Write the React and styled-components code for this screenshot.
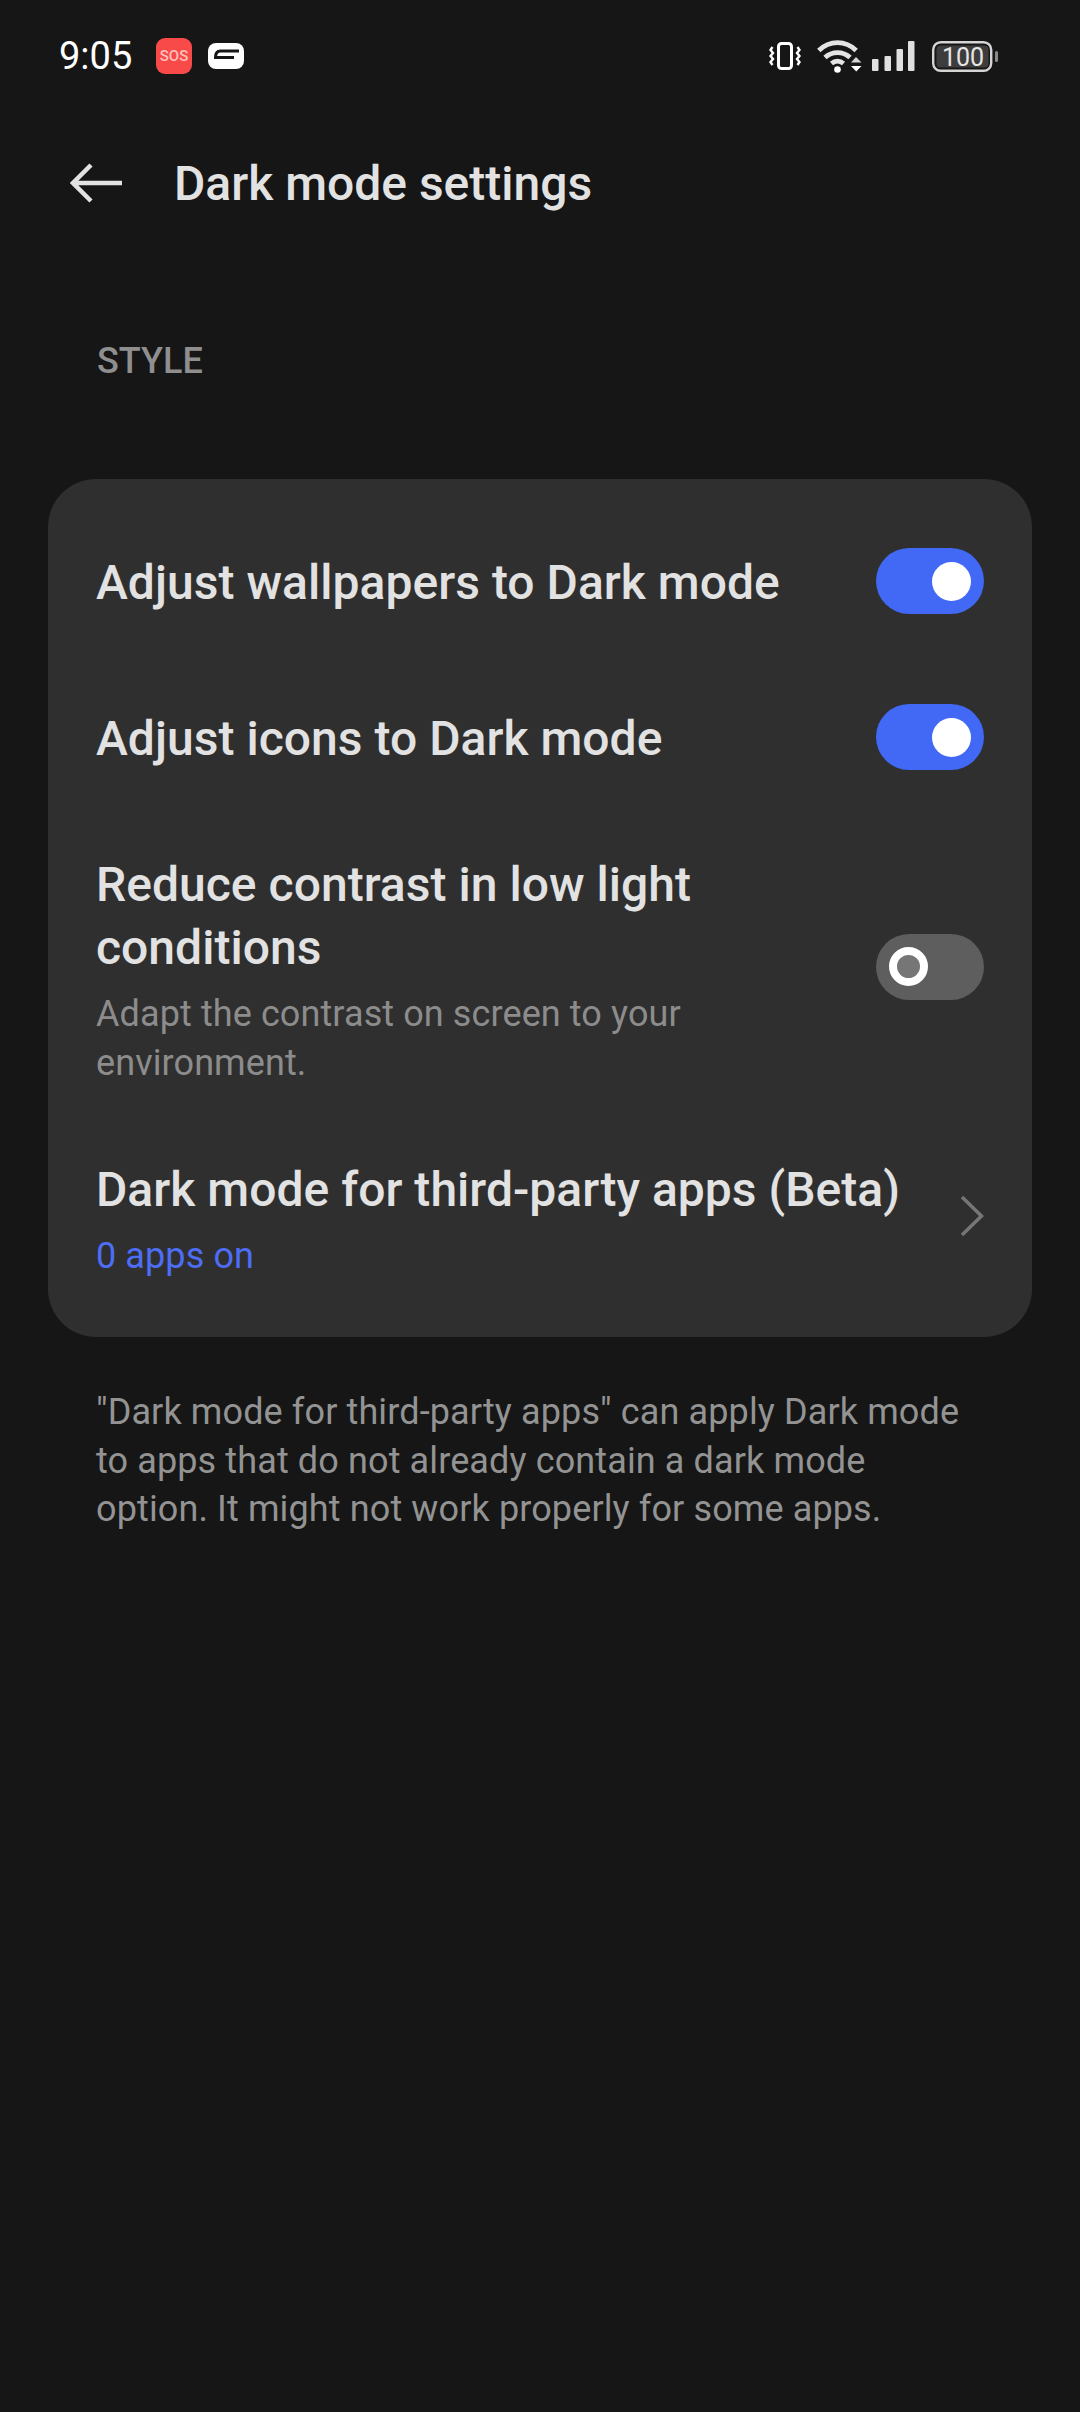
import React from "react";
import styled, { createGlobalStyle } from "styled-components";

const GlobalStyle = createGlobalStyle`
  html, body {
    margin: 0;
    padding: 0;
    background: #161616;
  }
  * {
    box-sizing: border-box;
  }
`;

const Screen = styled.div`
  width: 1080px;
  height: 2412px;
  background: #161616;
  font-family: Roboto, "Noto Sans", sans-serif;
  overflow: hidden;
`;

const StatusBar = styled.div`
  height: 112px;
  padding: 0 82px 0 59px;
  display: flex;
  align-items: center;
  justify-content: space-between;
`;

const StatusGroup = styled.div`
  display: flex;
  align-items: center;
`;

const Clock = styled.span`
  font-size: 38px;
  font-weight: 400;
  color: #fff;
  width: 97px;
`;

const SosBadge = styled.span`
  width: 36px;
  height: 36px;
  border-radius: 9px;
  background: #f84a48;
  color: #ffc0bd;
  font-size: 15px;
  font-weight: 500;
  display: flex;
  align-items: center;
  justify-content: center;
  margin-right: 16px;
`;

const Header = styled.div`
  height: 142px;
  padding-left: 70px;
  display: flex;
  align-items: center;
`;

const BackIcon = styled.svg`
  width: 52px;
  height: 40px;
  margin-right: 52px;
`;

const Title = styled.h1`
  margin: 0;
  font-size: 48px;
  font-weight: 500;
  color: #e2e2e2;
`;

const SectionLabel = styled.div`
  padding: 86px 0 0 97px;
  height: 225px;
  font-size: 36px;
  line-height: 42px;
  font-weight: 500;
  color: #8f8f8f;
`;

const Card = styled.div`
  margin: 0 48px;
  height: 858px;
  border-radius: 48px;
  background: #2f2f2f;
  padding-top: 22px;
`;

const Row = styled.div`
  display: flex;
  align-items: center;
  justify-content: space-between;
  padding: ${(p) => p.$top}px 48px ${(p) => p.$bottom}px;
`;

const RowText = styled.div`
  width: 700px;
`;

const RowTitle = styled.div`
  padding-top: ${(p) => p.$nudge || 0}px;
  font-size: 48px;
  letter-spacing: 0.03px;
  line-height: 63px;
  font-weight: 500;
  color: #e2e2e2;
`;

const RowSub = styled.div`
  margin-top: ${(p) => p.$gap}px;
  font-size: 36px;
  letter-spacing: 0.1px;
  line-height: 49px;
  color: ${(p) => (p.$accent ? "#4d6df5" : "#8c8c8c")};
`;

const Track = styled.div`
  width: 108px;
  height: 66px;
  border-radius: 33px;
  flex: none;
  display: flex;
  align-items: center;
  justify-content: ${(p) => (p.$on ? "flex-end" : "flex-start")};
  padding: 0 13px;
  margin-bottom: ${(p) => p.$lift || 0}px;
  background: ${(p) => (p.$on ? "#4268f6" : "#5e5e5e")};
`;

const Knob = styled.div`
  width: 39px;
  height: 39px;
  border-radius: 50%;
  background: ${(p) => (p.$on ? "#fff" : "#767676")};
  border: ${(p) => (p.$on ? "none" : "8px solid #fff")};
`;

const ChevronIcon = styled.svg`
  width: 24px;
  height: 42px;
  flex: none;
  margin-bottom: 8px;
`;

const FootNote = styled.p`
  margin: 51px 0 0;
  padding: 0 110px 0 96px;
  font-size: 36px;
  letter-spacing: 0.12px;
  line-height: 48.5px;
  color: #939393;
`;

const StatusIcon = styled.svg`
  flex: none;
  margin-right: ${(p) => p.$gap || 0}px;
`;

const Toggle = ({ on, lift }) => (
  <Track $on={on} $lift={lift}>
    <Knob $on={on} />
  </Track>
);

const VibrateIcon = () => (
  <StatusIcon $gap={16} width="32" height="28" viewBox="0 0 32 28" fill="none">
    <rect x="9.500" y="1.500" width="13" height="25" rx="3" stroke="#fff" strokeWidth="3" />
    <path d="M3.500 5L1.500 8l2.500 3-2.500 3 2.500 3-2.500 3 2 3" stroke="#fff" strokeWidth="2.400" />
    <path d="M28.500 5l2 3-2.500 3 2.500 3-2.500 3 2.500 3-2 3" stroke="#fff" strokeWidth="2.400" />
  </StatusIcon>
);

const WifiIcon = () => (
  <StatusIcon $gap={10} width="45" height="34" viewBox="0 0 45 34" fill="none">
    <path d="M1.800 11.500C12.500 1 28.500 1 39.200 11.500" stroke="#e4e4e4" strokeWidth="4.800" />
    <path d="M8 18.500C15 12 26 12 33 18.500" stroke="#e4e4e4" strokeWidth="4.800" />
    <path d="M14.500 24.500C18 21.500 23 21.500 26.500 24.500" stroke="#e4e4e4" strokeWidth="4.800" />
    <circle cx="20.500" cy="30.500" r="3.300" fill="#fff" />
    <path d="M34 23.500l5-5.500 5.500 5.500z" fill="#d4d4d4" />
    <path d="M34 27h10.500l-5.250 5.500z" fill="#fff" />
  </StatusIcon>
);

const SignalIcon = () => (
  <StatusIcon $gap={17} width="43" height="30" viewBox="0 0 43 30">
    <rect x="0" y="18" width="6.500" height="12" rx="1" fill="#e0e0e0" />
    <rect x="12.500" y="15" width="6.500" height="15" rx="1" fill="#e0e0e0" />
    <rect x="24.500" y="8" width="6.500" height="22" rx="1" fill="#e0e0e0" />
    <rect x="36" y="0" width="6.500" height="30" rx="1" fill="#e0e0e0" />
  </StatusIcon>
);

const BatteryIcon = () => (
  <StatusIcon width="66" height="31" viewBox="0 0 66 31">
    <rect x="1.200" y="1.200" width="58" height="28.600" rx="7.500" fill="none" stroke="#d4d4d4" strokeWidth="2.400" />
    <rect x="4.500" y="4.500" width="52" height="22" rx="4" fill="#3d3d3d" />
    <rect x="63" y="10" width="3" height="11" rx="1.500" fill="#8a8a8a" />
    <text x="31" y="24.500" textAnchor="middle" fontFamily="Roboto, sans-serif" fontSize="25" fill="#e6e6e6">100</text>
  </StatusIcon>
);

const CarIcon = () => (
  <svg width="36" height="26" viewBox="0 0 36 26">
    <rect x="0" y="0" width="36" height="26" rx="8" fill="#fff" />
    <path d="M31 8H12.500C9 8 7.500 10.500 7.500 14.500H26" fill="none" stroke="#161616" strokeWidth="3" />
  </svg>
);

const App = () => (
  <Screen>
    <GlobalStyle />
    <StatusBar>
      <StatusGroup>
        <Clock>9:05</Clock>
        <SosBadge>SOS</SosBadge>
        <CarIcon />
      </StatusGroup>
      <StatusGroup>
        <VibrateIcon />
        <WifiIcon />
        <SignalIcon />
        <BatteryIcon />
      </StatusGroup>
    </StatusBar>
    <Header>
      <BackIcon viewBox="0 0 52 40" fill="none">
        <path d="M52 20H3M21 2L3 20l18 18" stroke="#e2e2e2" strokeWidth="4.500" />
      </BackIcon>
      <Title>Dark mode settings</Title>
    </Header>
    <SectionLabel>STYLE</SectionLabel>
    <Card>
      <Row $top={47} $bottom={43}>
        <RowTitle $nudge={2}>Adjust wallpapers to Dark mode</RowTitle>
        <Toggle on />
      </Row>
      <Row $top={47} $bottom={48}>
        <RowTitle $nudge={2}>Adjust icons to Dark mode</RowTitle>
        <Toggle on />
      </Row>
      <Row $top={35} $bottom={36}>
        <RowText>
          <RowTitle>Reduce contrast in low light conditions</RowTitle>
          <RowSub $gap={11}>Adapt the contrast on screen to your environment.</RowSub>
        </RowText>
        <Toggle lift={8} />
      </Row>
      <Row $top={34} $bottom={34}>
        <div>
          <RowTitle>Dark mode for third-party apps (Beta)</RowTitle>
          <RowSub $gap={11} $accent>0 apps on</RowSub>
        </div>
        <ChevronIcon viewBox="0 0 24 42" fill="none">
          <path d="M2 2l19.500 19L2 40" stroke="#767676" strokeWidth="3.500" />
        </ChevronIcon>
      </Row>
    </Card>
    <FootNote>
      "Dark mode for third-party apps" can apply Dark mode to apps that do not already contain a dark mode option. It might not work properly for some apps.
    </FootNote>
  </Screen>
);

export default App;
